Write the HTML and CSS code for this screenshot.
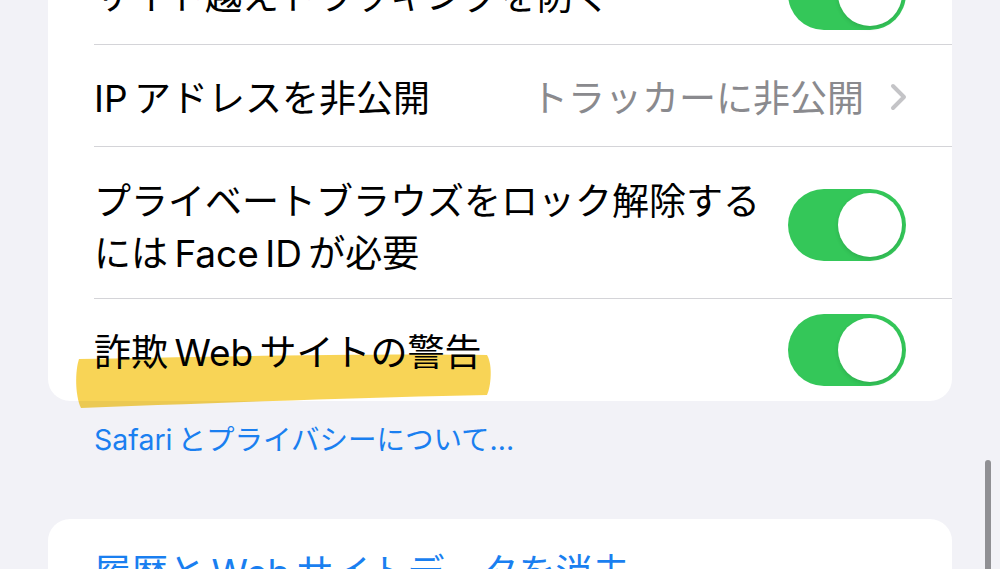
FILE: index.html
```html
<!DOCTYPE html>
<html lang="ja">
<head>
    <meta charset="UTF-8">
    <meta name="viewport" content="width=device-width, initial-scale=1.0">
    <title>Safari プライバシーとセキュリティ</title>
    <link rel="stylesheet" href="styles.css">
</head>
<body>
    <div class="screen">
        <section class="group">
            <div class="row">
                <span class="label">サイト越えトラッキングを防ぐ</span>
                <span class="toggle on"><span class="knob"></span></span>
            </div>
            <div class="row">
                <span class="label">IP アドレスを非公開</span>
                <span class="detail">
                    <span class="value">トラッカーに非公開</span>
                    <svg class="chevron" width="18" height="28" viewBox="0 0 18 28">
                        <path d="M3 3 L14 14 L3 25" fill="none" stroke="#c4c4c7" stroke-width="4" stroke-linecap="round" stroke-linejoin="round"/>
                    </svg>
                </span>
            </div>
            <div class="row tall">
                <span class="label">プライベートブラウズをロック解除する<br>には Face ID が必要</span>
                <span class="toggle on"><span class="knob"></span></span>
            </div>
            <div class="row marked">
                <span class="label">詐欺 Web サイトの警告</span>
                <span class="toggle on"><span class="knob"></span></span>
                <svg class="marker" width="424" height="60" viewBox="0 0 424 60">
                    <path d="M6 8 C120 6 300 2 414 4 C420 14 418 36 414 44 C300 46 140 52 8 57 C2 44 2 20 6 8 Z" fill="#f7cf44" opacity="0.9"/>
                </svg>
            </div>
        </section>

        <p class="footer-link">Safari とプライバシーについて...</p>

        <section class="group">
            <div class="row">
                <span class="label action">履歴と Web サイトデータを消去</span>
            </div>
        </section>
    </div>
    <div class="scrollbar"></div>
</body>
</html>
```

FILE: styles.css
```css
body {
    margin: 0;
    padding: 0;
    background-color: #f2f2f7;
    font-family: "Inter", "Noto Sans CJK JP", sans-serif;
    color: #000;
    overflow: hidden;
}

.screen {
    margin-top: -57px;
    padding: 0 48px;
}

.group {
    background-color: #fff;
    border-radius: 22px;
}

.row {
    position: relative;
    display: flex;
    align-items: center;
    justify-content: space-between;
    min-height: 102px;
    margin-left: 46px;
    padding-right: 46px;
    border-bottom: 1px solid #d4d4d8;
    box-sizing: border-box;
}

.group .row:last-child {
    border-bottom: none;
    min-height: 102px;
}

.row.tall {
    min-height: 151px;
    padding-top: 23px;
    padding-bottom: 18px;
}

.label {
    padding-top: 6px;
    font-size: 37px;
    line-height: 52px;
    word-spacing: -4px;
    position: relative;
    z-index: 2;
}

.label.action {
    color: #1a7ff0;
}

.detail {
    display: flex;
    align-items: center;
    gap: 26px;
    padding-top: 2px;
}

.value {
    padding-top: 4px;
    font-size: 37px;
    line-height: 52px;
    color: #8a8a8e;
}

.chevron {
    display: block;
    margin-right: -2px;
}

.toggle {
    flex-shrink: 0;
    position: relative;
    width: 118px;
    height: 72px;
    border-radius: 36px;
    background-color: #e9e9eb;
}

.toggle.on {
    background-color: #34c759;
}

.toggle .knob {
    position: absolute;
    top: 4px;
    left: 4px;
    width: 64px;
    height: 64px;
    border-radius: 50%;
    background-color: #fff;
    box-shadow: 0 2px 4px rgba(0, 0, 0, 0.12);
}

.toggle.on .knob {
    left: 50px;
}

.marker {
    position: absolute;
    left: -21px;
    top: 52px;
    z-index: 3;
    mix-blend-mode: multiply;
    pointer-events: none;
}

.footer-link {
    margin: 0;
    padding: 21px 0 61px 46px;
    font-size: 28.5px;
    line-height: 36px;
    color: #1a7ff0;
    word-spacing: -3px;
}

.scrollbar {
    position: fixed;
    right: 9px;
    top: 460px;
    width: 6px;
    height: 140px;
    border-radius: 3px;
    background-color: #909094;
}
```
